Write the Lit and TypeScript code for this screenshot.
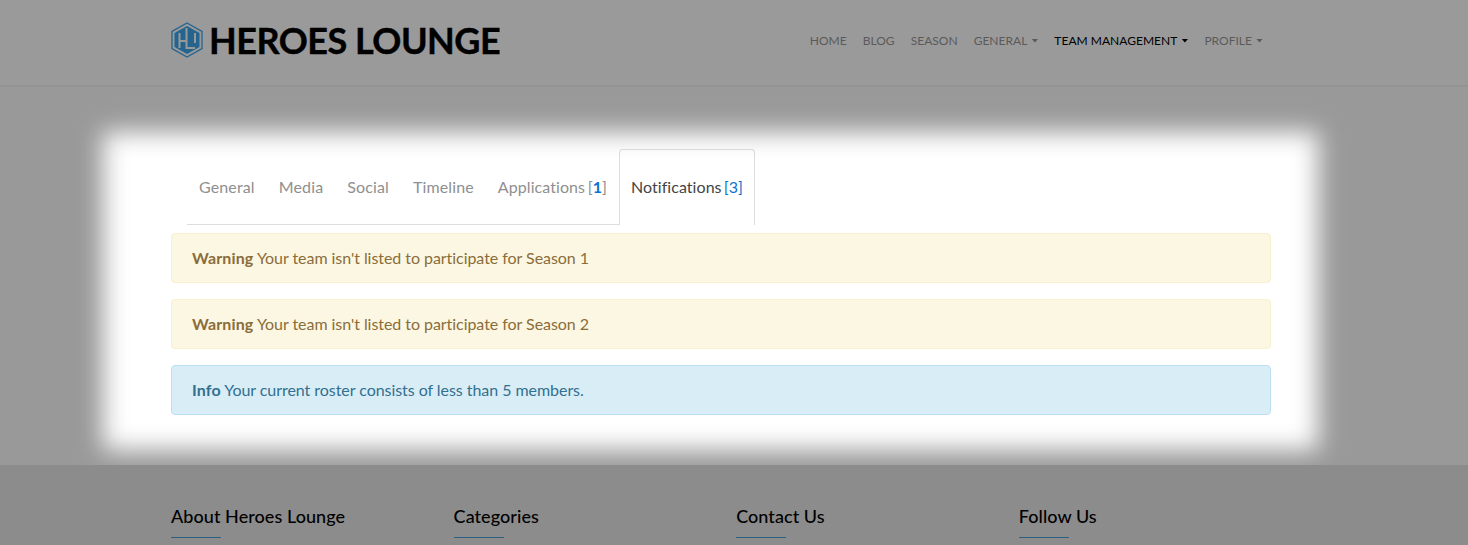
import { LitElement, html, css } from "lit";
import { customElement } from "lit/decorators.js";

const navItems = [
  { label: "Home" },
  { label: "Blog" },
  { label: "Season" },
  { label: "General", caret: true },
  { label: "Team Management", caret: true, active: true },
  { label: "Profile", caret: true },
];
const tabs = ["General", "Media", "Social", "Timeline"];
const footerCols = ["About Heroes Lounge", "Categories", "Contact Us", "Follow Us"];

@customElement("app-root")
export class AppRoot extends LitElement {
  static styles = css`
    :host {
      display: block;
      height: 545px;
      overflow: hidden;
      font-family: Lato, "Open Sans", sans-serif;
      font-size: 16px;
    }
    * { box-sizing: border-box; }
    .header {
      height: 87px;
      background: #9a9a9a;
      border-bottom: 2px solid #949494;
      display: flex;
      align-items: flex-start;
      justify-content: space-between;
      padding: 21px 205px 0 171px;
    }
    .brand {
      display: flex;
      align-items: center;
      gap: 6px;
      height: 38px;
      font-size: 36px;
      font-weight: 700;
      color: #000;
      letter-spacing: -0.5px;
      -webkit-text-stroke: 0.4px #000;
      white-space: nowrap;
    }
    .brand svg { display: block; flex: none; }
    .nav {
      display: flex;
      gap: 16px;
      height: 38px;
      align-items: center;
      font-size: 12px;
      letter-spacing: 0.02px;
      text-transform: uppercase;
      color: #5a5a5a;
      white-space: nowrap;
    }
    .nav .active { color: #000; }
    .caret {
      display: inline-block;
      width: 7px;
      height: 4px;
      margin-left: 4px;
      vertical-align: 2px;
      background: currentColor;
      clip-path: polygon(0 0, 100% 0, 50% 100%);
    }
    .main {
      position: relative;
      height: 378px;
      overflow: hidden;
      background: #fff;
      padding: 62px 0 0 171px;
    }
    .spot {
      position: absolute;
      left: 103px;
      top: 45px;
      width: 1215px;
      height: 318px;
      box-shadow: 0 0 0 1500px #999;
      filter: blur(12px);
      pointer-events: none;
    }
    .content { width: 1100px; }
    .tabs {
      display: inline-flex;
      margin-left: 16px;
      height: 76px;
      vertical-align: top;
    }
    .tab {
      padding: 28px 12px 0;
      height: 76px;
      color: #8f8f8f;
      letter-spacing: 0.13px;
      border-bottom: 1px solid #ddd;
      white-space: nowrap;
    }
    .tab.count { word-spacing: -1.6px; letter-spacing: 0.08px; }
    .tab.current {
      color: #444;
      border: 1px solid #ddd;
      border-bottom: 0;
      border-radius: 4px 4px 0 0;
      padding: 27px 11px 0;
      letter-spacing: 0.05px;
      word-spacing: -2px;
    }
    .tab b { color: #0a74d1; font-weight: 700; }
    .tab .blue { color: #0a74d1; font-weight: 400; }
    .alerts {
      display: flex;
      flex-direction: column;
      gap: 16px;
      margin-top: 8px;
    }
    .alert {
      height: 50px;
      border: 1px solid;
      border-radius: 4px;
      padding: 0 20px 2px;
      display: flex;
      align-items: center;
      white-space: pre;
      letter-spacing: -0.05px;
    }
    .alert strong { letter-spacing: 0.14px; }
    .warn { background: #fcf7e2; border-color: #f8f0cf; color: #8a6d3b; }
    .info { background: #d9edf7; border-color: #bce0f1; color: #31708f; }
    .footer {
      height: 80px;
      background: #8c8c8c;
      padding: 39px 0 0 171px;
      display: grid;
      grid-template-columns: repeat(4, 282.6px);
    }
    .footer h4 {
      margin: 0;
      font-size: 18px;
      font-weight: 500;
      line-height: 24px;
      letter-spacing: 0.06px;
      color: #000;
    }
    .rule {
      width: 50px;
      height: 1px;
      margin-top: 9px;
      background: #2b5f7f;
    }
  `;

  render() {
    return html`
      <header class="header">
        <div class="brand">
          <svg width="32" height="36" viewBox="0 0 32 36">
            <path d="M16 1 L31 9.5 V26.5 L16 35 L1 26.5 V9.5 Z" fill="none" stroke="#25648f" stroke-width="1.3" />
            <path d="M16 4 L28.5 11 V25 L16 32 L3.5 25 V11 Z" fill="#25648f" />
            <path d="M8.5 11 V26 M8.5 19 H15.5 M15.5 6 V26 H24 M24 11 V21" fill="none" stroke="#999" stroke-width="2" />
          </svg>
          <span>HEROES LOUNGE</span>
        </div>
        <nav class="nav">
          ${navItems.map(
            (n) => html`<span class=${n.active ? "active" : ""}>${n.label}${n.caret ? html`<i class="caret"></i>` : ""}</span>`
          )}
        </nav>
      </header>
      <main class="main">
        <div class="content">
          <div class="tabs">
            ${tabs.map((t) => html`<div class="tab">${t}</div>`)}
            <div class="tab count">Applications [<b>1</b>]</div>
            <div class="tab current">Notifications <span class="blue">[3]</span></div>
          </div>
          <div class="alerts">
            <div class="alert warn"><span><strong>Warning</strong> Your team isn't listed to participate for Season 1</span></div>
            <div class="alert warn"><span><strong>Warning</strong> Your team isn't listed to participate for Season 2</span></div>
            <div class="alert info"><span><strong>Info</strong> Your current roster consists of less than 5 members.</span></div>
          </div>
        </div>
        <div class="spot"></div>
      </main>
      <footer class="footer">
        ${footerCols.map((c) => html`<div><h4>${c}</h4><div class="rule"></div></div>`)}
      </footer>
    `;
  }
}
